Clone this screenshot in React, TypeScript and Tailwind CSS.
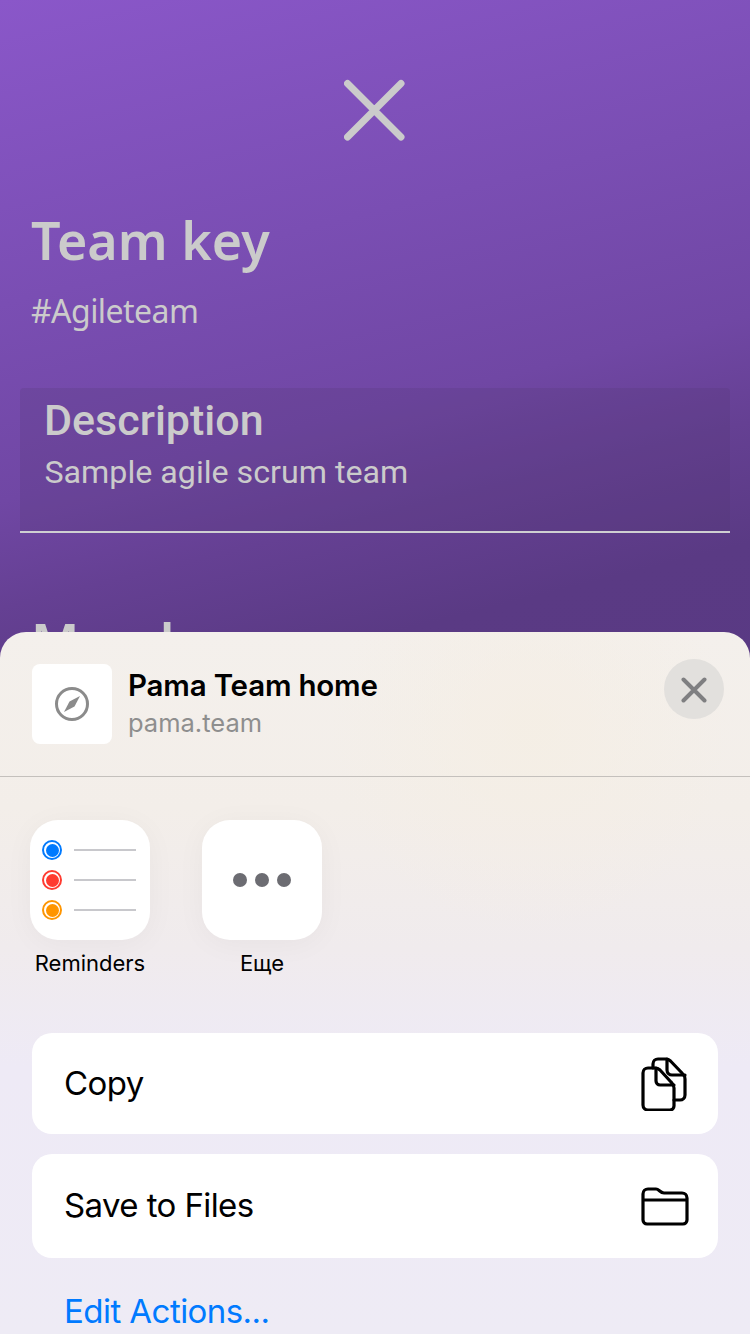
import React from "react";

function Reminder({ ring, dot }: { ring: string; dot: string }) {
  return (
    <div className="flex items-center gap-[12px]">
      <div className={`w-[20px] h-[20px] rounded-full border-2 flex items-center justify-center ${ring}`}>
        <div className={`w-[13px] h-[13px] rounded-full ${dot}`} />
      </div>
      <div className="w-[62px] h-[2px] bg-[#c8c8cc]" />
    </div>
  );
}

function ActionRow({ label, icon, h }: { label: string; icon: React.ReactNode; h: string }) {
  return (
    <div className={`${h} bg-white rounded-[20px] flex items-center justify-between pl-[33px] pr-[28px]`}>
      <span className="text-[33px] text-black tracking-[-0.6px] ml-[-1px]">{label}</span>
      {icon}
    </div>
  );
}

export default function App() {
  return (
    <div className="relative w-[750px] h-[1334px] overflow-hidden bg-[linear-gradient(166deg,#8a57c9_0%,#7a4eb3_20%,#7047a4_33%,#654093_40%,#5a3a84_48%,#553880_100%)] font-['Inter',sans-serif]">
      {/* page behind the sheet */}
      <div className="h-[640px] overflow-hidden text-[#cbcbcb]">
        <div className="flex justify-center pt-[79px]">
          <svg width="62" height="62" viewBox="0 0 62 62" fill="none" stroke="#cbcbcb" strokeWidth="7" strokeLinecap="round">
            <path d="M3.5 4.5L57 58M57 4.5L3.5 58" />
          </svg>
        </div>
        <div className="pl-[31px] pt-[64px] font-['Noto_Sans',sans-serif]">
          <h1 className="text-[52px] leading-[70px] font-semibold">Team key</h1>
          <p className="text-[32px] leading-[44px] pt-[14px] tracking-[-0.55px]">#Agileteam</p>
        </div>
        <div className="mx-[20px] mt-[55px] h-[145px] bg-[#52376f]/20 border-b-2 border-[#cfcfd2] rounded-t-[4px] pl-[24px] font-['Roboto',sans-serif]">
          <h2 className="text-[43px] leading-[48px] font-medium pt-[8px] box-content">Description</h2>
          <p className="text-[32.2px] leading-[40px] pt-[8px] ml-[0.5px]">Sample agile scrum team</p>
        </div>
        <h2 className="pl-[31px] pt-[74px] text-[52px] leading-[70px] font-semibold font-['Noto_Sans',sans-serif]">Members</h2>
      </div>

      {/* share sheet */}
      <div className="absolute left-0 right-0 top-[632px] bottom-0 rounded-t-[26px] bg-[radial-gradient(circle_at_530px_100px,rgba(245,238,227,0.7)_0%,rgba(245,238,227,0)_200px),linear-gradient(180deg,#f4f0ec_0%,#f3eee9_25%,#f0ebed_45%,#eeeaf6_62%,#eeebf5_100%)]">
        <div className="h-[145px] border-b border-[#c4c0bc] flex items-start pl-[32px] pr-[26px] pt-[32px]">
          <div className="w-[80px] h-[80px] bg-white rounded-[8px] flex items-center justify-center">
            <svg width="36" height="36" viewBox="0 0 36 36" fill="none">
              <circle cx="18" cy="18" r="15.500" stroke="#8b8b8b" strokeWidth="3" />
              <path d="M26 10L20.5 20.5L10 26L15.5 15.5Z" fill="#8b8b8b" />
            </svg>
          </div>
          <div className="ml-[17px] flex-1">
            <div className="text-[29.5px] leading-[36px] font-semibold text-black pt-[3px] tracking-[-0.2px] ml-[-1px]">Pama Team home</div>
            <div className="text-[25.5px] leading-[32px] text-[#8e8e8e] pt-[4px] ml-[-1px]">pama.team</div>
          </div>
          <div className="w-[60px] h-[60px] mt-[-5px] rounded-full bg-[#e2e0dd] flex items-center justify-center">
            <svg width="26" height="26" viewBox="0 0 26 26" fill="none" stroke="#7f7f81" strokeWidth="4" strokeLinecap="round" className="mt-[1px]">
              <path d="M2.5 2.5L23.5 23.5M23.5 2.5L2.5 23.5" />
            </svg>
          </div>
        </div>

        <div className="flex pt-[43px] pl-[30px] gap-[52px]">
          <div className="w-[120px] flex flex-col items-center">
            <div className="w-[120px] h-[120px] bg-white rounded-[28px] shadow-[0_4px_30px_rgba(0,0,0,0.04)] flex flex-col justify-center gap-[10px] pl-[12px]">
              <Reminder ring="border-[#007aff]" dot="bg-[#007aff]" />
              <Reminder ring="border-[#ff3b30]" dot="bg-[#ff3b30]" />
              <Reminder ring="border-[#ff9500]" dot="bg-[#ff9500]" />
            </div>
            <span className="text-[22px] leading-[28px] text-black mt-[9px] whitespace-nowrap">Reminders</span>
          </div>
          <div className="w-[120px] flex flex-col items-center">
            <div className="w-[120px] h-[120px] bg-white rounded-[28px] shadow-[0_4px_30px_rgba(0,0,0,0.04)] flex items-center justify-center gap-[8px]">
              <div className="w-[14px] h-[14px] rounded-full bg-[#6c6c72]" />
              <div className="w-[14px] h-[14px] rounded-full bg-[#6c6c72]" />
              <div className="w-[14px] h-[14px] rounded-full bg-[#6c6c72]" />
            </div>
            <span className="text-[22px] leading-[28px] text-black mt-[9px]">Еще</span>
          </div>
        </div>

        <div className="mx-[32px] mt-[56px] flex flex-col gap-[20px]">
          <ActionRow
            label="Copy"
            h="h-[101px]"
            icon={
              <svg width="46" height="54" viewBox="0 0 46 54" fill="none" stroke="#000" strokeWidth="3.2" strokeLinejoin="round" strokeLinecap="round" className="mr-[3px]">
                <path d="M12 11V7a5 5 0 0 1 5-5h8c2 0 3 .6 4.5 2L41 16c2 2 3 3 3 6v16a5 5 0 0 1-5 5h-6" />
                <path d="M26 2v11a5 5 0 0 0 5 5h13" />
                <path d="M2 16a5 5 0 0 1 5-5h7c2.500 0 3.500.6 5 2l11 12c2 2 3 3 3 6v18a4 4 0 0 1-4 4H7a5 5 0 0 1-5-5Z" />
                <path d="M15 11v13a4 4 0 0 0 4 4h14" />
              </svg>
            }
          />
          <ActionRow
            label="Save to Files"
            h="h-[104px]"
            icon={
              <svg width="48" height="40" viewBox="0 0 48 40" fill="none" stroke="#000" strokeWidth="3.2" strokeLinejoin="round" className="mr-[1px]">
                <path d="M2 8a5 5 0 0 1 5-5h8c3 0 4 4 8 4h18a5 5 0 0 1 5 5v22a4 4 0 0 1-4 4H6a4 4 0 0 1-4-4Z" />
                <path d="M2 14h44" />
              </svg>
            }
          />
        </div>
        <div className="pl-[64px] pt-[31px] text-[33px] leading-[44px] text-[#007aff] tracking-[-0.55px]">Edit Actions...</div>
      </div>
    </div>
  );
}
